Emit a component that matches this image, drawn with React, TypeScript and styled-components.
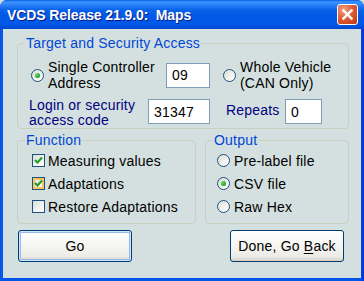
import React from "react";
import styled, { createGlobalStyle } from "styled-components";

const GlobalStyle = createGlobalStyle`
  html, body {
    margin: 0;
    padding: 0;
    background: #d4e0df;
  }
  body {
    font-family: "Liberation Sans", Arial, sans-serif;
  }
`;

const CheckMark = () => (
  <svg width="9" height="9" viewBox="0 0 9 9">
    <polyline points="1,4 3.5,6.5 8,1.5" fill="none" stroke="#21a121" strokeWidth="2.2" />
  </svg>
);

const RadioButton = ({ checked }: { checked?: boolean }) => (
  <RadioCircle>{checked && <RadioDot />}</RadioCircle>
);

const CheckBox = ({ checked, hot }: { checked?: boolean; hot?: boolean }) => (
  <CheckSquare $hot={hot}>{checked && <CheckMark />}</CheckSquare>
);

const App = () => {
  return (
    <>
      <GlobalStyle />
      <Window>
        <TitleBar>
          <Title>VCDS Release 21.9.0:&nbsp; Maps</Title>
          <CloseButton>
            <svg width="11" height="11" viewBox="0 0 11 11">
              <path d="M1.5 1.5 L9.5 9.5 M9.5 1.5 L1.5 9.5" stroke="#fff" strokeWidth="2.4" strokeLinecap="square" />
            </svg>
          </CloseButton>
        </TitleBar>

        <Client>
          <GroupBox>
            <Legend>Target and Security Access</Legend>
            <TargetRow>
              <Option $width={135}>
                <RadioButton checked />
                <TwoLine>
                  Single Controller
                  <br />
                  Address
                </TwoLine>
              </Option>
              <TextBox $width={44} defaultValue="09" readOnly />
              <Option $gapLeft={13}>
                <RadioButton />
                <TwoLine>
                  Whole Vehicle
                  <br />
                  (CAN Only)
                </TwoLine>
              </Option>
            </TargetRow>
            <LoginRow>
              <FieldLabel $width={119}>
                Login or security
                <br />
                access code
              </FieldLabel>
              <TextBox $width={62} $top={1} defaultValue="31347" readOnly />
              <RepeatsLabel>Repeats</RepeatsLabel>
              <TextBox $width={37} $top={1} defaultValue="0" readOnly />
            </LoginRow>
          </GroupBox>

          <GroupRow>
            <GroupBox $width={179}>
              <Legend>Function</Legend>
              <OptionList $indent={14}>
                <ListItem>
                  <CheckBox checked />
                  <span>Measuring values</span>
                </ListItem>
                <ListItem>
                  <CheckBox checked hot />
                  <span>Adaptations</span>
                </ListItem>
                <ListItem>
                  <CheckBox />
                  <span>Restore Adaptations</span>
                </ListItem>
              </OptionList>
            </GroupBox>
            <GroupBox $width={144}>
              <Legend>Output</Legend>
              <OptionList $indent={11}>
                <ListItem $gap={4}>
                  <RadioButton />
                  <span>Pre-label file</span>
                </ListItem>
                <ListItem $gap={4}>
                  <RadioButton checked />
                  <span>CSV file</span>
                </ListItem>
                <ListItem $gap={4}>
                  <RadioButton />
                  <span>Raw Hex</span>
                </ListItem>
              </OptionList>
            </GroupBox>
          </GroupRow>

          <ButtonRow>
            <PushButton $default>
              <span>Go</span>
            </PushButton>
            <PushButton>
              <span>
                Done, Go <u>B</u>ack
              </span>
            </PushButton>
          </ButtonRow>
        </Client>
      </Window>
    </>
  );
};

export default App;

const Window = styled.div`
  width: 364px;
  height: 281px;
  box-sizing: border-box;
  display: flex;
  flex-direction: column;
  background: linear-gradient(90deg, #0831d9 0px, #166aee 1px, #0055ea 2px, #0055ea 361px, #0831d9 363px);
  border-radius: 7px 7px 0 0;
  overflow: hidden;
`;

const TitleBar = styled.div`
  height: 29px;
  flex: none;
  display: flex;
  align-items: center;
  justify-content: space-between;
  padding: 0 6px 0 7px;
  background: linear-gradient(
    180deg,
    #0a5ee8 0px,
    #3d95ff 2px,
    #2b80f7 5px,
    #0863ea 10px,
    #0058e6 16px,
    #0059e8 24px,
    #0047d0 29px
  );
`;

const Title = styled.span`
  color: #fff;
  font-family: "Liberation Sans", Arial, sans-serif;
  font-weight: bold;
  font-size: 14px;
  letter-spacing: -0.1px;
  text-shadow: 1px 1px 0 #0a1883;
  margin-top: 1px;
`;

const CloseButton = styled.div`
  width: 21px;
  height: 21px;
  box-sizing: border-box;
  border: 1px solid #fff;
  border-radius: 3px;
  display: flex;
  align-items: center;
  justify-content: center;
  background: radial-gradient(circle at 30% 25%, #f0a288 0%, #e2643e 40%, #cf4720 75%, #b8361a 100%);
`;

const Client = styled.div`
  flex: 1;
  margin: 0 3px 3px;
  background: #d4e0df;
  padding: 6px 12px 0 14px;
  display: flex;
  flex-direction: column;
  font-family: "Liberation Sans", Arial, sans-serif;
  font-size: 14px;
  letter-spacing: 0.2px;
  color: #000;
`;

const GroupBox = styled.fieldset<{ $width?: number }>`
  margin: 0;
  padding: 0;
  box-sizing: border-box;
  width: ${(p) => (p.$width ? `${p.$width}px` : "auto")};
  border: 1px solid #c9cfc1;
  border-radius: 4px;
  min-width: 0;
`;

const Legend = styled.legend`
  margin-left: 7px;
  padding: 0 1px;
  color: #0046d5;
  line-height: 16px;
  font-size: 14px;
`;

const TargetRow = styled.div`
  display: flex;
  align-items: center;
  margin-top: 8px;
  padding-left: 13px;
  height: 32px;
`;

const Option = styled.div<{ $width?: number; $gapLeft?: number }>`
  display: flex;
  align-items: center;
  gap: 4px;
  width: ${(p) => (p.$width ? `${p.$width}px` : "auto")};
  margin-left: ${(p) => p.$gapLeft || 0}px;
  flex: none;
`;

const TwoLine = styled.div`
  line-height: 16px;
  color: #000;
`;

const TextBox = styled.input<{ $width: number; $top?: number }>`
  width: ${(p) => p.$width}px;
  height: 25px;
  box-sizing: border-box;
  flex: none;
  margin: ${(p) => p.$top || 0}px 0 0 0;
  border: 1px solid #7f9db9;
  background: #fff;
  padding: 0 5px;
  font-family: "Liberation Sans", Arial, sans-serif;
  font-size: 14px;
  letter-spacing: 0.2px;
  color: #000;
  outline: none;
`;

const LoginRow = styled.div`
  display: flex;
  align-items: flex-start;
  margin-top: 7px;
  padding-left: 11px;
`;

const FieldLabel = styled.div<{ $width: number }>`
  width: ${(p) => p.$width}px;
  flex: none;
  color: #000080;
  line-height: 15px;
`;

const RepeatsLabel = styled.div`
  color: #000080;
  line-height: 16px;
  margin: 4px 0 0 16px;
  width: 59px;
  flex: none;
`;

const GroupRow = styled.div`
  display: flex;
  justify-content: space-between;
  margin-top: 3px;
`;

const OptionList = styled.div<{ $indent: number }>`
  display: flex;
  flex-direction: column;
  padding: 1px 0 5px ${(p) => p.$indent}px;
`;

const ListItem = styled.div<{ $gap?: number }>`
  height: 23px;
  display: flex;
  align-items: center;
  gap: ${(p) => p.$gap ?? 3}px;
  white-space: nowrap;
`;

const RadioCircle = styled.span`
  width: 13px;
  height: 13px;
  box-sizing: border-box;
  flex: none;
  border-radius: 50%;
  border: 1px solid #1c5180;
  background: linear-gradient(135deg, #dcdad3 0%, #f2f2ef 55%, #ffffff 100%);
  display: flex;
  align-items: center;
  justify-content: center;
`;

const RadioDot = styled.span`
  width: 5px;
  height: 5px;
  border-radius: 50%;
  background: radial-gradient(circle at 35% 35%, #5fe05f 0%, #21a121 70%, #1a8a1a 100%);
`;

const CheckSquare = styled.span<{ $hot?: boolean }>`
  width: 13px;
  height: 13px;
  box-sizing: border-box;
  flex: none;
  border: 1px solid #1c5180;
  background: linear-gradient(135deg, #dcdcd7 0%, #f4f4f1 60%, #ffffff 100%);
  box-shadow: ${(p) => (p.$hot ? "inset 0 0 0 2px #fbc55f" : "none")};
  display: flex;
  align-items: center;
  justify-content: center;
`;

const ButtonRow = styled.div`
  display: flex;
  justify-content: space-between;
  margin-top: 6px;
  padding: 0 5px 0 1px;
`;

const PushButton = styled.div<{ $default?: boolean }>`
  width: 114px;
  height: 32px;
  box-sizing: border-box;
  display: flex;
  align-items: center;
  justify-content: center;
  border: 1px solid #003c74;
  border-radius: 3px;
  background: linear-gradient(180deg, #ffffff 0%, #f5f5f2 50%, #ecebe6 85%, #d6d0c5 100%);
  box-shadow: ${(p) =>
    p.$default ? "inset 0 0 0 1px #cee7ff, inset 0 0 0 2px #98b8ea" : "none"};
  color: #000;
  font-size: 14px;
  letter-spacing: 0.2px;
  white-space: pre;

  u {
    text-decoration: underline;
    text-underline-offset: 2px;
  }
`;
